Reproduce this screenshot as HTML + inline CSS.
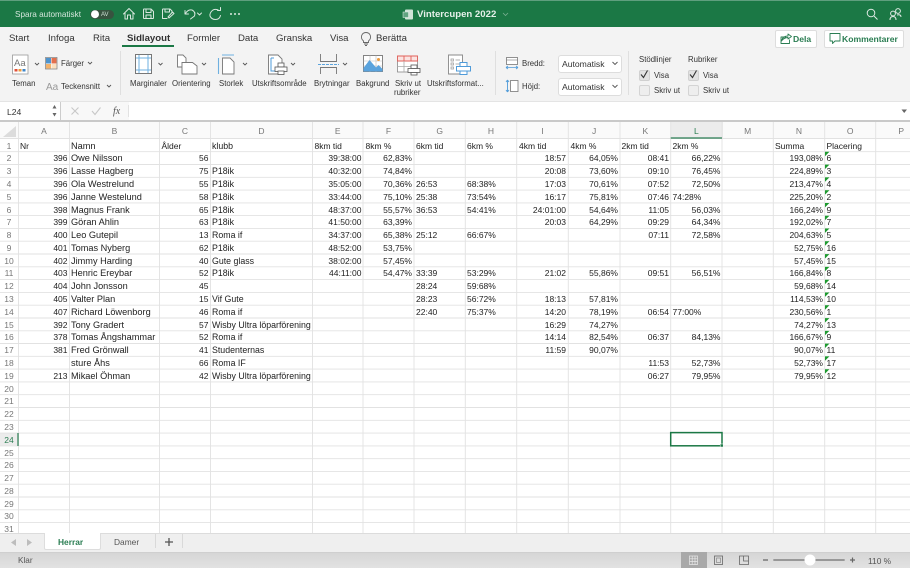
<!DOCTYPE html>
<html lang="sv"><head><meta charset="utf-8"><title>Vintercupen 2022</title>
<style>
html,body{margin:0;padding:0;width:910px;height:568px;overflow:hidden;background:#fff}
#root{position:relative;width:910px;height:568px;overflow:hidden;font-family:"Liberation Sans",sans-serif;filter:blur(.3px);color:#333}
.b{position:absolute}
.t{position:absolute;white-space:nowrap;line-height:10px;margin-top:1px}
.rb{font-size:7.8px;color:#333}
svg{position:absolute;left:0;top:0}
.r{position:absolute;left:0;width:910px;height:12.8px;font-size:8.5px;line-height:13.6px;color:#222}
.r span{position:absolute;top:.7px;white-space:nowrap}
.h{left:0;width:18px;text-align:center;color:#777}
.A{left:18.5px;width:49px;text-align:right}.B{left:71px;font-size:9.2px}.C{left:159.5px;width:49px;text-align:right}.D{left:212px;font-size:8.8px}
.E{left:312.5px;width:49px;text-align:right}.F{left:363px;width:49px;text-align:right}.G{left:416px}.H{left:467px}
.I{left:517px;width:49px;text-align:right}.J{left:568px;width:50px;text-align:right}.K{left:620px;width:49px;text-align:right}.L{left:671px;width:49.5px;text-align:right}
.N{left:773px;width:50px;text-align:right}.O{left:826.5px}
.col{position:absolute;top:123.5px;font-size:8.5px;line-height:14px;color:#777;text-align:center}
</style></head><body><div id="root">

<!-- top bar -->
<div class="b" style="left:0;top:0;width:910px;height:27px;background:#1b7845"></div>
<div class="b" style="left:0;top:0;width:910px;height:1px;background:#5f9f7e"></div>
<div class="b" style="left:90px;top:9.5px;width:24px;height:9.5px;border-radius:5px;background:#37533f"></div>
<span class="t" style="left:15px;top:9px;font-size:8.2px;color:#d5e6dc">Spara automatiskt</span>
<span class="t" style="left:101px;top:9px;font-size:6px;color:#cfe0d6">AV</span>
<span class="t" style="left:417px;top:9px;font-size:9.6px;font-weight:bold;color:#e6f0ea">Vintercupen 2022</span>

<!-- tabs/ribbon -->
<div class="b" style="left:0;top:27px;width:910px;height:74px;background:#f3f3f3"></div>
<span class="t" style="left:9px;top:32.5px;font-size:9.6px;color:#333">Start</span>
<span class="t" style="left:48px;top:32.5px;font-size:9.6px;color:#333">Infoga</span>
<span class="t" style="left:93px;top:32.5px;font-size:9.6px;color:#333">Rita</span>
<span class="t" style="left:127px;top:32.5px;font-size:9.6px;font-weight:bold;color:#333">Sidlayout</span>
<div class="b" style="left:122px;top:45px;width:52px;height:1.6px;background:#1b7845"></div>
<span class="t" style="left:187px;top:32.5px;font-size:9.6px;color:#333">Formler</span>
<span class="t" style="left:238px;top:32.5px;font-size:9.6px;color:#333">Data</span>
<span class="t" style="left:276px;top:32.5px;font-size:9.6px;color:#333">Granska</span>
<span class="t" style="left:330px;top:32.5px;font-size:9.6px;color:#333">Visa</span>
<span class="t" style="left:376px;top:32.5px;font-size:9.6px;color:#333">Berätta</span>

<div class="b" style="left:775px;top:30px;width:40px;height:15.5px;background:#fff;border:.5px solid #ddd;border-radius:2px"></div>
<span class="t" style="left:793px;top:33px;font-size:8.6px;font-weight:bold;color:#2a7d52">Dela</span>
<div class="b" style="left:824px;top:30px;width:78px;height:15.5px;background:#fff;border:.5px solid #ddd;border-radius:2px"></div>
<span class="t" style="left:842px;top:33px;font-size:8.6px;font-weight:bold;color:#2a7d52">Kommentarer</span>

<span class="t rb" style="left:12px;top:78px">Teman</span>
<span class="t rb" style="left:61px;top:58px">Färger</span>
<span class="t rb" style="left:61px;top:81px">Teckensnitt</span>
<span class="t rb" style="left:130px;top:78px">Marginaler</span>
<span class="t rb" style="left:172px;top:78px">Orientering</span>
<span class="t rb" style="left:219px;top:78px">Storlek</span>
<span class="t rb" style="left:252px;top:78px">Utskriftsområde</span>
<span class="t rb" style="left:314px;top:78px">Brytningar</span>
<span class="t rb" style="left:356px;top:78px">Bakgrund</span>
<span class="t rb" style="left:395px;top:78px">Skriv ut</span>
<span class="t rb" style="left:394px;top:87px">rubriker</span>
<span class="t rb" style="left:427px;top:78px">Utskriftsformat...</span>
<span class="t rb" style="left:522px;top:58px">Bredd:</span>
<span class="t rb" style="left:522px;top:81px">Höjd:</span>
<div class="b" style="left:557.5px;top:54.5px;width:62px;height:16px;background:#fff;border:.5px solid #ddd;border-radius:3px"></div>
<div class="b" style="left:557.5px;top:77.5px;width:62px;height:16px;background:#fff;border:.5px solid #ddd;border-radius:3px"></div>
<span class="t" style="left:562px;top:57.5px;font-size:8.6px;color:#333">Automatisk</span>
<span class="t" style="left:562px;top:80.5px;font-size:8.6px;color:#333">Automatisk</span>
<span class="t rb" style="left:639px;top:54px">Stödlinjer</span>
<span class="t rb" style="left:688px;top:54px">Rubriker</span>
<span class="t rb" style="left:654px;top:70px">Visa</span>
<span class="t rb" style="left:703px;top:70px">Visa</span>
<span class="t rb" style="left:654px;top:85px">Skriv ut</span>
<span class="t rb" style="left:703px;top:85px">Skriv ut</span>
<div class="b" style="left:639px;top:70px;width:9px;height:9px;background:#e2e2e2;border:.5px solid #d0d0d0;border-radius:2px"></div>
<div class="b" style="left:688px;top:70px;width:9px;height:9px;background:#e2e2e2;border:.5px solid #d0d0d0;border-radius:2px"></div>
<div class="b" style="left:639px;top:85px;width:9px;height:9px;background:#eee;border:.5px solid #d4d4d4;border-radius:2px"></div>
<div class="b" style="left:688px;top:85px;width:9px;height:9px;background:#eee;border:.5px solid #d4d4d4;border-radius:2px"></div>

<!-- formula bar -->
<div class="b" style="left:0;top:101px;width:910px;height:19px;background:#fff;border-top:.5px solid #e4e4e4"></div>
<div class="b" style="left:60px;top:102px;width:68.5px;height:18px;background:#f8f8f8"></div>
<div class="b" style="left:60px;top:102px;width:1px;height:18px;background:#ccc"></div>
<span class="t" style="left:7px;top:105.5px;font-size:8.6px;color:#333">L24</span>
<span class="t" style="left:113px;top:105.5px;font-size:10px;font-family:'Liberation Serif',serif;font-style:italic;color:#555">fx</span>
<div class="b" style="left:0;top:120px;width:910px;height:2.4px;background:#c9c9c9"></div>

<!-- col header row -->
<div class="b" style="left:0;top:122.4px;width:910px;height:16px;background:#fafafa"></div>
<div class="b" style="left:670.5px;top:122.4px;width:52px;height:16px;background:#ececec"></div>
<div class="b" style="left:0;top:433px;width:18.5px;height:13px;background:#ececec"></div>
<span class="col" style="left:18.5px;width:51px">A</span>
<span class="col" style="left:69.5px;width:90px">B</span>
<span class="col" style="left:159.5px;width:51px">C</span>
<span class="col" style="left:210.5px;width:102px">D</span>
<span class="col" style="left:312.5px;width:50.5px">E</span>
<span class="col" style="left:363px;width:51px">F</span>
<span class="col" style="left:414px;width:51.3px">G</span>
<span class="col" style="left:465.3px;width:51.4px">H</span>
<span class="col" style="left:516.7px;width:51.6px">I</span>
<span class="col" style="left:568.3px;width:51.7px">J</span>
<span class="col" style="left:620px;width:50.7px">K</span>
<span class="col" style="left:670.7px;width:51.3px;color:#2a7d52">L</span>
<span class="col" style="left:722px;width:51.3px">M</span>
<span class="col" style="left:773.3px;width:51.4px">N</span>
<span class="col" style="left:824.7px;width:51px">O</span>
<span class="col" style="left:875.7px;width:51px">P</span>

<!-- grid + icons -->
<svg width="910" height="568" viewBox="0 0 910 568" fill="none">
<g stroke="#e2e2e2" stroke-width=".9">
<path d="M0 138.5H910M0 151.7H910M0 164.5H910M0 177.3H910M0 190.1H910M0 202.9H910M0 215.6H910M0 228.4H910M0 241.2H910M0 254H910M0 266.8H910M0 279.6H910M0 292.4H910M0 305.2H910M0 318H910M0 330.8H910M0 343.5H910M0 356.3H910M0 369.1H910M0 381.9H910M0 394.7H910M0 407.5H910M0 420.3H910M0 433.1H910M0 445.9H910M0 458.7H910M0 471.4H910M0 484.2H910M0 497H910M0 509.8H910M0 522.6H910"/>
<path d="M18.5 122V533M69.5 122V533M159.5 122V533M210.5 122V533M312.5 122V533M363 122V533M414 122V533M465.3 122V533M516.7 122V533M568.3 122V533M620 122V533M670.7 122V533M722 122V533M773.3 122V533M824.7 122V533M875.7 122V533"/>
</g>
<path d="M670.7 138H722" stroke="#2a7d52" stroke-width="1.2"/>
<path d="M18 433V446" stroke="#2a7d52" stroke-width="1.2"/>
<path d="M3 137H16V126Z" fill="#dcdcdc"/>
<rect x="670.7" y="432.6" width="51.3" height="13.2" stroke="#1b7845" stroke-width="1.5"/>
<rect x="720.2" y="444" width="3" height="3" fill="#1b7845" stroke="#fff" stroke-width=".5"/>
<path fill="#1c9a2e" d="M825 151.8h4.4L825 156.2ZM825 164.6h4.4L825 169ZM825 177.4h4.4L825 181.800ZM825 190.200h4.4L825 194.600ZM825 203h4.4L825 207.400ZM825 215.700h4.4L825 220.100ZM825 228.500h4.4L825 232.900ZM825 241.300h4.4L825 245.700ZM825 254.100h4.4L825 258.500ZM825 266.900h4.4L825 271.300ZM825 279.700h4.4L825 284.100ZM825 292.500h4.4L825 296.900ZM825 305.300h4.4L825 309.700ZM825 318.100h4.4L825 322.500ZM825 330.900h4.4L825 335.300ZM825 343.600h4.4L825 348ZM825 356.400h4.4L825 360.800ZM825 369.200h4.4L825 373.600Z"/>

<!-- titlebar icons -->
<circle cx="95" cy="14.2" r="4" fill="#fff"/>
<g stroke="#d8e7de" stroke-width="1" stroke-linejoin="round" stroke-linecap="round">
<path d="M123.5 14L129 8.5L134.5 14M125 13V19H127.5V15H130.5V19H133V13"/>
<path d="M143.5 9.5Q143.5 9 144 9H151L153.5 11.5V18Q153.5 18.5 153 18.5H144Q143.5 18.5 143.5 18ZM146 9V12.5H151V9M146 18.5V15H151V18.5"/>
<path d="M162.5 9.5Q162.5 9 163 9H170L172 11V13M162.5 9.5V18.5H167M165 9V12H169.5V9M169 18L174 13.5L172.5 12L168 17Z"/>
<path d="M185 10.5V14H188.5M185.5 13.5Q188 9 192 10Q196 12 194.5 16L190.5 19"/>
<path d="M197.5 13L199.5 15L201.5 13"/>
<path d="M219 10.5Q216 8.5 213 10Q209.5 12.5 210 16Q211.5 19.5 215.5 19.5Q219.5 19.5 220.5 15.5M217.5 10.5H220.5V7.5"/>
</g>
<g fill="#dce9e1"><circle cx="231" cy="14" r="1"/><circle cx="235" cy="14" r="1"/><circle cx="239" cy="14" r="1"/></g>
<rect x="405" y="9.5" width="8" height="10" rx="1" fill="#cfe3d7"/><rect x="403" y="12" width="5.5" height="5.5" fill="#5fa37f" stroke="#e6f0ea" stroke-width=".5"/>
<path d="M503 13L505.5 15.5L508 13" stroke="#79ae91" stroke-width=".8"/>
<g stroke="#dfeae4" stroke-width="1">
<circle cx="871" cy="13" r="3.8"/><path d="M874 16L877.5 19.5"/>
<circle cx="898" cy="11" r="2.4"/><circle cx="893" cy="13.5" r="2.4"/><path d="M890 20Q890 16.5 893 16.5Q896 16.5 896 20M897 15Q901 14 901 17"/>
</g>

<!-- lightbulb, share, comment -->
<g stroke="#666" stroke-width=".9"><path d="M363.5 41Q361 39 361.500 36Q362.500 32.500 366 32.500Q369.500 32.500 370.500 36Q371 39 368.500 41V42.500H363.500ZM364 44H368M365 45.500H367"/></g>
<g stroke="#2a7d52" stroke-width=".9" stroke-linejoin="round"><path d="M786 37H781V43.500H789.500V39.500M781.500 41Q782.500 36 788 36V34L791.500 36.500L788 39V37.500Q784 37.500 781.500 41Z"/>
<path d="M830 33.500H840V41H835L832.500 43.500V41H830Z"/></g>

<!-- Teman -->
<rect x="12.500" y="55" width="15.500" height="19" fill="#fff" stroke="#999" stroke-width=".8"/>
<text x="14" y="66" font-family="Liberation Sans, sans-serif" font-size="9.500" fill="#777">Aa</text>
<text x="46" y="90" font-family="Liberation Sans, sans-serif" font-size="10" fill="#999">Aa</text>
<rect x="14.500" y="69" width="3" height="2.500" fill="#e0503a"/><rect x="18.500" y="69" width="3" height="2.500" fill="#ee9b3b"/><rect x="22.500" y="69" width="3" height="2.500" fill="#3e86c9"/>
<g stroke="#555" stroke-width=".9"><path d="M35 63L37 65L39 63M88 62L90 64L92 62M107 85L109 87L111 85M158.500 63L160.500 65L162.500 63M202 63L204 65L206 63M243 63L245 65L247 63M291 63L293 65L295 63M343 63L345 65L347 63M612.500 62L615 64.500L617.500 62M612.500 85L615 87.500L617.500 85"/></g>
<rect x="45.500" y="57.500" width="11.500" height="11.500" fill="#fff" stroke="#777" stroke-width=".7"/>
<rect x="46" y="58" width="5" height="5.500" fill="#4f94cd"/><rect x="51.500" y="58" width="5" height="5.500" fill="#e3704e"/><rect x="46" y="64" width="5" height="4.500" fill="#f3b26b"/><rect x="51.500" y="64" width="5" height="4.500" fill="#fbe0c0"/>

<!-- Marginaler -->
<rect x="135.500" y="54.500" width="16" height="19" fill="#fff" stroke="#777"/>
<path d="M139 55V73M148 55V73M136 58H151M136 70H151" stroke="#6fb0e0" stroke-width="1"/>
<!-- Orientering -->
<path d="M177.500 55H183L186 58V67H177.500Z" fill="#fff" stroke="#777" stroke-width=".9"/>
<path d="M182 62.500H192.500L197 66V74H182Z" fill="#fff" stroke="#777" stroke-width=".9"/>
<!-- Storlek -->
<path d="M218.500 58V74M222 55H234" stroke="#6fb0e0" stroke-width="1.100"/>
<path d="M222.500 58H230L234 62V74H222.500Z" fill="#fff" stroke="#777" stroke-width=".9"/>
<!-- Utskriftsområde -->
<path d="M268.500 55H278L282 59V74H268.500Z" fill="#fff" stroke="#777" stroke-width=".9"/>
<path d="M271 58H274M271 58V71H276" stroke="#4f9bd9" stroke-width="1"/>
<rect x="278" y="63" width="6" height="4" fill="#fff" stroke="#555" stroke-width=".8"/><rect x="275" y="67" width="12" height="4.500" fill="#fff" stroke="#555" stroke-width=".8"/><rect x="278" y="71" width="6" height="3.500" fill="#fff" stroke="#555" stroke-width=".8"/>
<!-- Brytningar -->
<path d="M320.500 54V61.500H336.500V54M320.500 74V67.500H336.500V74" stroke="#777" stroke-width=".9"/>
<path d="M318 64.500H339" stroke="#5aa3dd" stroke-width="1" stroke-dasharray="3 1"/>
<!-- Bakgrund -->
<rect x="363.500" y="55.500" width="19" height="16" fill="#fff" stroke="#777" stroke-width=".9"/>
<path d="M370 55.500V72M376 55.500V72M363.500 61H382.500M363.500 66H382.500" stroke="#bbb" stroke-width=".6"/>
<path d="M363.500 71.500V68L369.500 60L376 67.500L378.500 65L382.500 69V71.500Z" fill="#5aa3dd"/>
<circle cx="378.500" cy="59.500" r="1.500" fill="#ee9b3b"/>
<!-- Skriv ut rubriker -->
<rect x="397.500" y="56" width="20" height="16" fill="#fff" stroke="#888" stroke-width=".8"/>
<path d="M397.500 56H417.500V61H397.500ZM404 56V61M411 56V61" stroke="#e0605a" stroke-width=".9" fill="#fbe3e1"/>
<path d="M397.500 66.500H411M404 61V72" stroke="#aaa" stroke-width=".8"/>
<rect x="411" y="65" width="6" height="3.500" fill="#fff" stroke="#555" stroke-width=".8"/><rect x="408" y="68.500" width="12" height="4" fill="#fff" stroke="#555" stroke-width=".8"/><rect x="411" y="72.500" width="6" height="2.500" fill="#fff" stroke="#555" stroke-width=".8"/>
<!-- Utskriftsformat -->
<path d="M448.500 55H462.500V74H448.500Z" fill="#fff" stroke="#888" stroke-width=".9"/>
<path d="M451 59H453.500V61H451ZM451 63H453.500V65H451ZM451 67H453.500V69H451ZM455.500 60H460M455.500 64H460" stroke="#999" stroke-width=".7"/>
<rect x="460" y="62.500" width="7" height="4" fill="#fff" stroke="#4f9bd9"/><rect x="456.500" y="66.500" width="14" height="4.500" fill="#fff" stroke="#4f9bd9"/><rect x="460" y="71" width="7" height="3.500" fill="#fff" stroke="#4f9bd9"/>
<!-- Bredd / Höjd -->
<rect x="506.500" y="57.500" width="11" height="7" fill="#fff" stroke="#777" stroke-width=".8"/><path d="M506.500 60H517.500" stroke="#777" stroke-width=".6"/>
<path d="M506 67.500H518M506 67.500L508 66M506 67.500L508 69M518 67.500L516 66M518 67.500L516 69" stroke="#4f9bd9" stroke-width=".8"/>
<rect x="510.500" y="80.500" width="7.500" height="11" fill="#fff" stroke="#777" stroke-width=".8"/>
<path d="M507.500 80V92M507.500 80L506 82M507.500 80L509 82M507.500 92L506 90M507.500 92L509 90" stroke="#4f9bd9" stroke-width=".9"/>
<!-- separators -->
<path d="M120.500 51V95M495.500 51V95M628.500 51V95" stroke="#dadada" stroke-width=".8"/>
<!-- check marks -->
<path d="M641 74.500L643.500 77.500L647.500 70.500M690 74.500L692.500 77.500L696.500 70.500" stroke="#333" stroke-width="1.100"/>
<!-- formula icons -->
<path d="M52.500 108.500L54.500 105L56.500 108.500ZM52.500 113L54.500 116.500L56.500 113Z" fill="#666"/>
<path d="M71.500 107.500L78.500 114.500M78.500 107.500L71.500 114.500M92 111L95 114.500L100.500 107.500" stroke="#c8c8c8" stroke-width="1.100"/>
<path d="M128.500 105V117" stroke="#ddd" stroke-width=".8"/>
<path d="M901.500 109.500H907L904.200 113Z" fill="#666"/>
</svg>

<!-- rows -->
<div class="r" style="top:138.900px"><span class="h">1</span><span style="left:20px">Nr</span><span class="B">Namn</span><span style="left:161.500px">Ålder</span><span class="D">klubb</span><span style="left:314.500px">8km tid</span><span style="left:365.500px">8km %</span><span class="G">6km tid</span><span class="H">6km %</span><span style="left:519px">4km tid</span><span style="left:570.500px">4km %</span><span style="left:621.500px">2km tid</span><span style="left:672.500px">2km %</span><span style="left:775px">Summa</span><span class="O">Placering</span></div>
<div class="r" style="top:151.700px"><span class="h">2</span><span class="A">396</span><span class="B">Owe Nilsson</span><span class="C">56</span><span class="E">39:38:00</span><span class="F">62,83%</span><span class="I">18:57</span><span class="J">64,05%</span><span class="K">08:41</span><span class="L">66,22%</span><span class="N">193,08%</span><span class="O">6</span></div>
<div class="r" style="top:164.500px"><span class="h">3</span><span class="A">396</span><span class="B">Lasse Hagberg</span><span class="C">75</span><span class="D">P18ik</span><span class="E">40:32:00</span><span class="F">74,84%</span><span class="I">20:08</span><span class="J">73,60%</span><span class="K">09:10</span><span class="L">76,45%</span><span class="N">224,89%</span><span class="O">3</span></div>
<div class="r" style="top:177.300px"><span class="h">4</span><span class="A">396</span><span class="B">Ola Westrelund</span><span class="C">55</span><span class="D">P18ik</span><span class="E">35:05:00</span><span class="F">70,36%</span><span class="G">26:53</span><span class="H">68:38%</span><span class="I">17:03</span><span class="J">70,61%</span><span class="K">07:52</span><span class="L">72,50%</span><span class="N">213,47%</span><span class="O">4</span></div>
<div class="r" style="top:190.100px"><span class="h">5</span><span class="A">396</span><span class="B">Janne Westelund</span><span class="C">58</span><span class="D">P18ik</span><span class="E">33:44:00</span><span class="F">75,10%</span><span class="G">25:38</span><span class="H">73:54%</span><span class="I">16:17</span><span class="J">75,81%</span><span class="K">07:46</span><span style="left:672.500px">74:28%</span><span class="N">225,20%</span><span class="O">2</span></div>
<div class="r" style="top:202.900px"><span class="h">6</span><span class="A">398</span><span class="B">Magnus Frank</span><span class="C">65</span><span class="D">P18ik</span><span class="E">48:37:00</span><span class="F">55,57%</span><span class="G">36:53</span><span class="H">54:41%</span><span class="I">24:01:00</span><span class="J">54,64%</span><span class="K">11:05</span><span class="L">56,03%</span><span class="N">166,24%</span><span class="O">9</span></div>
<div class="r" style="top:215.600px"><span class="h">7</span><span class="A">399</span><span class="B">Göran Ahlin</span><span class="C">63</span><span class="D">P18ik</span><span class="E">41:50:00</span><span class="F">63,39%</span><span class="I">20:03</span><span class="J">64,29%</span><span class="K">09:29</span><span class="L">64,34%</span><span class="N">192,02%</span><span class="O">7</span></div>
<div class="r" style="top:228.400px"><span class="h">8</span><span class="A">400</span><span class="B">Leo Gutepil</span><span class="C">13</span><span class="D">Roma if</span><span class="E">34:37:00</span><span class="F">65,38%</span><span class="G">25:12</span><span class="H">66:67%</span><span class="K">07:11</span><span class="L">72,58%</span><span class="N">204,63%</span><span class="O">5</span></div>
<div class="r" style="top:241.200px"><span class="h">9</span><span class="A">401</span><span class="B">Tomas Nyberg</span><span class="C">62</span><span class="D">P18ik</span><span class="E">48:52:00</span><span class="F">53,75%</span><span class="N">52,75%</span><span class="O">16</span></div>
<div class="r" style="top:254px"><span class="h">10</span><span class="A">402</span><span class="B">Jimmy Harding</span><span class="C">40</span><span class="D">Gute glass</span><span class="E">38:02:00</span><span class="F">57,45%</span><span class="N">57,45%</span><span class="O">15</span></div>
<div class="r" style="top:266.800px"><span class="h">11</span><span class="A">403</span><span class="B">Henric Ereybar</span><span class="C">52</span><span class="D">P18ik</span><span class="E">44:11:00</span><span class="F">54,47%</span><span class="G">33:39</span><span class="H">53:29%</span><span class="I">21:02</span><span class="J">55,86%</span><span class="K">09:51</span><span class="L">56,51%</span><span class="N">166,84%</span><span class="O">8</span></div>
<div class="r" style="top:279.600px"><span class="h">12</span><span class="A">404</span><span class="B">John Jonsson</span><span class="C">45</span><span class="G">28:24</span><span class="H">59:68%</span><span class="N">59,68%</span><span class="O">14</span></div>
<div class="r" style="top:292.400px"><span class="h">13</span><span class="A">405</span><span class="B">Valter Plan</span><span class="C">15</span><span class="D">Vif Gute</span><span class="G">28:23</span><span class="H">56:72%</span><span class="I">18:13</span><span class="J">57,81%</span><span class="N">114,53%</span><span class="O">10</span></div>
<div class="r" style="top:305.200px"><span class="h">14</span><span class="A">407</span><span class="B">Richard Löwenborg</span><span class="C">46</span><span class="D">Roma if</span><span class="G">22:40</span><span class="H">75:37%</span><span class="I">14:20</span><span class="J">78,19%</span><span class="K">06:54</span><span style="left:672.500px">77:00%</span><span class="N">230,56%</span><span class="O">1</span></div>
<div class="r" style="top:318px"><span class="h">15</span><span class="A">392</span><span class="B">Tony Gradert</span><span class="C">57</span><span class="D">Wisby Ultra löparförening</span><span class="I">16:29</span><span class="J">74,27%</span><span class="N">74,27%</span><span class="O">13</span></div>
<div class="r" style="top:330.800px"><span class="h">16</span><span class="A">378</span><span class="B">Tomas Ångshammar</span><span class="C">52</span><span class="D">Roma if</span><span class="I">14:14</span><span class="J">82,54%</span><span class="K">06:37</span><span class="L">84,13%</span><span class="N">166,67%</span><span class="O">9</span></div>
<div class="r" style="top:343.500px"><span class="h">17</span><span class="A">381</span><span class="B">Fred Grönwall</span><span class="C">41</span><span class="D">Studenternas</span><span class="I">11:59</span><span class="J">90,07%</span><span class="N">90,07%</span><span class="O">11</span></div>
<div class="r" style="top:356.300px"><span class="h">18</span><span class="B">sture Åhs</span><span class="C">66</span><span class="D">Roma IF</span><span class="K">11:53</span><span class="L">52,73%</span><span class="N">52,73%</span><span class="O">17</span></div>
<div class="r" style="top:369.100px"><span class="h">19</span><span class="A">213</span><span class="B">Mikael Öhman</span><span class="C">42</span><span class="D">Wisby Ultra löparförening</span><span class="K">06:27</span><span class="L">79,95%</span><span class="N">79,95%</span><span class="O">12</span></div>
<div class="r" style="top:381.900px"><span class="h">20</span></div>
<div class="r" style="top:394.700px"><span class="h">21</span></div>
<div class="r" style="top:407.500px"><span class="h">22</span></div>
<div class="r" style="top:420.300px"><span class="h">23</span></div>
<div class="r" style="top:433.100px"><span class="h" style="color:#2a7d52">24</span></div>
<div class="r" style="top:445.900px"><span class="h">25</span></div>
<div class="r" style="top:458.700px"><span class="h">26</span></div>
<div class="r" style="top:471.400px"><span class="h">27</span></div>
<div class="r" style="top:484.200px"><span class="h">28</span></div>
<div class="r" style="top:497px"><span class="h">29</span></div>
<div class="r" style="top:509.800px"><span class="h">30</span></div>
<div class="r" style="top:522.600px"><span class="h">31</span></div>

<!-- sheet tabs -->
<div class="b" style="left:0;top:533px;width:910px;height:19px;background:#efefef;border-top:.5px solid #dcdcdc;box-sizing:border-box"></div>
<div class="b" style="left:43.500px;top:533px;width:55.500px;height:16px;background:#fff;border:.5px solid #ddd;border-top:0;border-radius:0 0 2px 2px"></div>
<span class="t" style="left:58px;top:536px;font-size:8.400px;font-weight:bold;color:#2a7d52">Herrar</span>
<span class="t" style="left:114px;top:536px;font-size:8.400px;color:#555">Damer</span>
<!-- status bar -->
<div class="b" style="left:0;top:552px;width:910px;height:16px;background:linear-gradient(#d6d6d6,#e2e2e2);border-top:.5px solid #cfcfcf;box-sizing:border-box"></div>
<div class="b" style="left:681px;top:552px;width:26px;height:16px;background:#a9a9a9"></div>
<span class="t" style="left:18px;top:555px;font-size:8.200px;color:#555">Klar</span>
<span class="t" style="left:868px;top:554.500px;font-size:8.400px;color:#555">110 %</span>
<svg width="910" height="568" viewBox="0 0 910 568" fill="none">
<path d="M155.500 534V548M182.500 534V548" stroke="#d4d4d4" stroke-width=".8"/>
<path d="M165 542H173M169 538V546" stroke="#555" stroke-width="1.300"/>
<path d="M16 539V546L11 542.500ZM27 539V546L32 542.500Z" fill="#bdbdbd"/>
<path d="M689.500 556H697.500V564.500H689.500ZM689.500 558.800H697.500M689.500 561.600H697.500M692.200 556V564.500M695 556V564.500" stroke="#e8e8e8" stroke-width=".7"/>
<rect x="714.500" y="556" width="8" height="8.500" stroke="#666" stroke-width=".8"/><rect x="716.500" y="558" width="4" height="4.500" stroke="#888" stroke-width=".7"/>
<path d="M739.500 556H748.500V564.500H739.500ZM743.500 556V561H748.500" stroke="#666" stroke-width=".8"/>
<path d="M763 560H768M850 560H855M852.500 557.500V562.500" stroke="#666" stroke-width="1.200"/>
<path d="M774 560H844" stroke="#8f8f8f" stroke-width="1.800" stroke-linecap="round"/>
<circle cx="810" cy="560" r="5.500" fill="#fff"/>
</svg>
</div></body></html>
